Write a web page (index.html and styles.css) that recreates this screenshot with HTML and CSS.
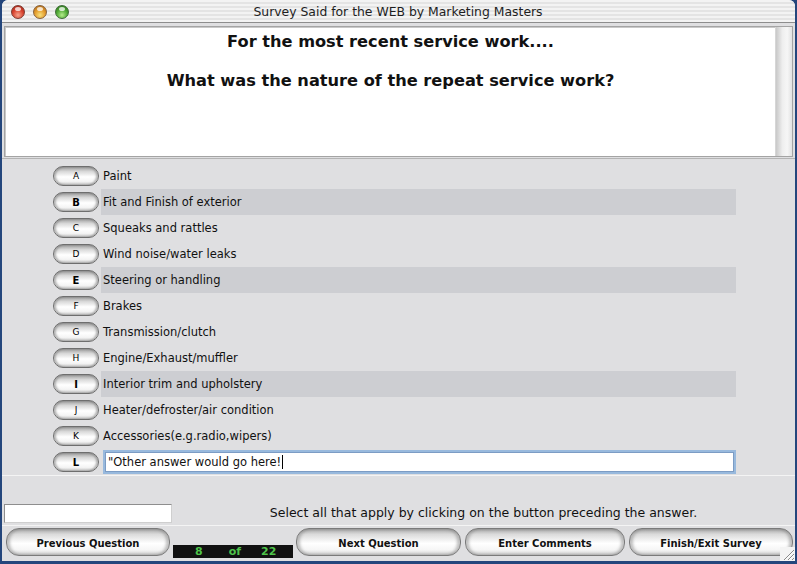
FILE: index.html
```html
<!DOCTYPE html>
<html>
<head>
<meta charset="utf-8">
<title>Survey Said for the WEB by Marketing Masters</title>
<link rel="stylesheet" href="styles.css">
</head>
<body>
<div class="window">
  <div class="titlebar">
    <div class="lights">
      <span class="light red"></span>
      <span class="light yellow"></span>
      <span class="light green"></span>
    </div>
    <div class="title">Survey Said for the WEB by Marketing Masters</div>
  </div>
  <div class="toppane">
    <div class="qbox">
      <div class="q1">For the most recent service work....</div>
      <div class="q2">What was the nature of the repeat service work?</div>
    </div>
    <div class="vscroll"></div>
  </div>
  <div class="divider"></div>
  <div class="options">
    <div class="opt"><span class="optbtn">A</span><span class="label">Paint</span></div>
    <div class="opt"><span class="optbtn sel">B</span><span class="label hl">Fit and Finish of exterior</span></div>
    <div class="opt"><span class="optbtn">C</span><span class="label">Squeaks and rattles</span></div>
    <div class="opt"><span class="optbtn">D</span><span class="label">Wind noise/water leaks</span></div>
    <div class="opt"><span class="optbtn sel">E</span><span class="label hl">Steering or handling</span></div>
    <div class="opt"><span class="optbtn">F</span><span class="label">Brakes</span></div>
    <div class="opt"><span class="optbtn">G</span><span class="label">Transmission/clutch</span></div>
    <div class="opt"><span class="optbtn">H</span><span class="label">Engine/Exhaust/muffler</span></div>
    <div class="opt"><span class="optbtn sel">I</span><span class="label hl">Interior trim and upholstery</span></div>
    <div class="opt"><span class="optbtn">J</span><span class="label">Heater/defroster/air condition</span></div>
    <div class="opt"><span class="optbtn">K</span><span class="label">Accessories(e.g.radio,wipers)</span></div>
    <div class="opt"><span class="optbtn sel">L</span><span class="other">"Other answer would go here!<span class="caret"></span></span></div>
  </div>
  <div class="sep"></div>
  <div class="status">
    <div class="smallfield"></div>
    <div class="hint">Select all that apply by clicking on the button preceding the answer.</div>
  </div>
  <div class="buttons">
    <div class="btn w-prev">Previous Question</div>
    <div class="counter"><span class="c1">8</span><span class="c2">of</span><span class="c3">22</span></div>
    <div class="btn w-next">Next Question</div>
    <div class="btn w-enter">Enter Comments</div>
    <div class="btn w-finish">Finish/Exit Survey</div>
  </div>
  <div class="grip">
    <svg width="15" height="14" viewBox="0 0 15 14">
      <rect width="15" height="14" fill="#f4f4f4"/>
      <path d="M4 13 L14 3 M8 13 L14 7 M12 13 L14 11" stroke="#8a8a8a" stroke-width="1"/>
      <path d="M5 13 L14 4 M9 13 L14 8" stroke="#ffffff" stroke-width="1"/>
    </svg>
  </div>
</div>
</body>
</html>
```
FILE: styles.css
```css
body {
  margin: 0;
  width: 797px;
  height: 564px;
  overflow: hidden;
  background: #24467c;
  font-family: "DejaVu Sans", "Liberation Sans", sans-serif;
  color: #000;
}

.window {
  margin-left: 2px;
  width: 793px;
  height: 561px;
  background: #dfdfe1;
  border-radius: 6px 6px 0 0;
  position: relative;
  overflow: hidden;
}

.titlebar {
  height: 22px;
  border-bottom: 1px solid #8d8d8d;
  background: repeating-linear-gradient(to bottom, #f3f3f3 0, #f3f3f3 2px, #e4e4e4 2px, #e4e4e4 4px);
  display: flex;
  align-items: center;
  position: relative;
}

.lights {
  display: flex;
  gap: 8px;
  padding-left: 9px;
  padding-top: 1px;
}

.light {
  width: 14px;
  height: 14px;
  border-radius: 50%;
  box-sizing: border-box;
  border: 1px solid #5a5a5a;
  position: relative;
}

.light::after {
  content: "";
  position: absolute;
  left: 3px;
  top: 1px;
  width: 6px;
  height: 4px;
  border-radius: 50%;
  background: rgba(255, 255, 255, 0.75);
}

.red { background: radial-gradient(circle at 50% 75%, #f6a38c 0, #d8432f 50%, #9b2015 100%); border-color: #7d3a30; }
.yellow { background: radial-gradient(circle at 50% 75%, #f8e07a 0, #e39a2b 50%, #a5631a 100%); border-color: #86603a; }
.green { background: radial-gradient(circle at 50% 75%, #b4ec8a 0, #4ea834 50%, #2b6e1c 100%); border-color: #3d6a35; }

.title {
  flex: 1;
  text-align: center;
  font-size: 12.4px;
  color: #1e1e1e;
  margin-right: 66px;
  margin-left: -2px;
  padding-top: 1px;
}

.toppane {
  margin: 3px 2px 0 2px;
  height: 129px;
  border: 1px solid #a4a4a4;
  display: flex;
  background: #f0f0f0;
}

.qbox {
  flex: 1;
  background: #fff;
  border-top: 1px solid #c9c9c9;
  border-left: 1px solid #c9c9c9;
  text-align: center;
  font-weight: bold;
  font-size: 16.2px;
  color: #111;
  padding-top: 2px;
}

.q1 { line-height: 24px; }
.q2 { line-height: 24px; margin-top: 15px; }

.vscroll {
  width: 16px;
  background: linear-gradient(to right, #c8c8c8 0, #eeeeee 40%, #f6f6f6 70%, #e2e2e2 100%);
  border-left: 1px solid #d6d6d6;
}

.divider {
  margin-top: 1px;
  border-top: 1px solid #b4b4b4;
  height: 0;
}

.options {
  padding-top: 4px;
}

.opt {
  height: 26px;
  display: flex;
  align-items: center;
}

.optbtn {
  margin-left: 51px;
  width: 46px;
  height: 20px;
  box-sizing: border-box;
  border: 1px solid #6e6e6e;
  border-radius: 10px;
  background: linear-gradient(to bottom, #9d9d9d 0, #d8d8d8 25%, #ffffff 55%, #f4f4f4 80%, #c4c4c4 100%);
  box-shadow: inset 2px 0 2px rgba(120,120,120,0.5), inset -2px 0 2px rgba(120,120,120,0.5);
  display: flex;
  align-items: center;
  justify-content: center;
  font-size: 9px;
  color: #000;
}

.optbtn.sel {
  font-weight: bold;
  font-size: 10px;
}

.label {
  margin-left: 2px;
  width: 633px;
  height: 26px;
  line-height: 26px;
  padding-left: 2px;
  font-size: 11.5px;
  color: #111;
}

.label.hl {
  background: #cdced2;
}

.other {
  margin-left: 4px;
  width: 633px;
  height: 24px;
  box-sizing: border-box;
  background: #fff;
  border: 2px solid #98b9dd;
  box-shadow: inset 0 0 0 1px #7c9cc4;
  font-size: 11.5px;
  line-height: 20px;
  padding-left: 3px;
  color: #111;
  display: flex;
  align-items: center;
}

.caret {
  display: inline-block;
  width: 1px;
  height: 14px;
  background: #000;
  margin-left: 1px;
}

.sep {
  margin-top: 0;
  border-top: 1px solid #f4f4f4;
}

.status {
  display: flex;
  align-items: center;
  margin-top: 27px;
  height: 20px;
}

.smallfield {
  margin-left: 2px;
  width: 168px;
  height: 19px;
  box-sizing: border-box;
  background: #fff;
  border: 1px solid #8e8e8e;
  border-bottom-color: #cfcfcf;
  border-right-color: #cfcfcf;
}

.hint {
  flex: 1;
  text-align: center;
  font-size: 12.5px;
  color: #111;
  padding-bottom: 2px;
}

.buttons {
  margin-top: 2px;
  border-top: 1px solid #f4f4f4;
  display: flex;
  align-items: flex-start;
  padding-top: 2px;
  padding-left: 4px;
}

.btn {
  height: 28px;
  box-sizing: border-box;
  border: 1px solid #7a7a7a;
  border-radius: 13px;
  background: linear-gradient(to bottom, #a8a8a8 0, #dadada 20%, #ffffff 55%, #f6f6f6 80%, #cfcfcf 100%);
  box-shadow: inset 3px 0 3px rgba(120,120,120,0.45), inset -3px 0 3px rgba(120,120,120,0.45);
  display: flex;
  align-items: center;
  justify-content: center;
  font-weight: bold;
  font-size: 10px;
  color: #111;
  padding-top: 2px;
}

.w-prev { width: 164px; }
.w-next { width: 165px; margin-left: 3px; }
.w-enter { width: 160px; margin-left: 4px; }
.w-finish { width: 164px; margin-left: 4px; }

.counter {
  margin-left: 3px;
  margin-top: 17px;
  width: 120px;
  height: 13px;
  background: #111111;
  color: #4ec44a;
  font-weight: bold;
  font-size: 11px;
  line-height: 13px;
  display: flex;
}

.c1 { margin-left: 22px; }
.c2 { margin-left: 26px; }
.c3 { margin-left: 20px; }

.grip {
  position: absolute;
  right: 0;
  bottom: 0;
  width: 15px;
  height: 14px;
  line-height: 0;
}
```
